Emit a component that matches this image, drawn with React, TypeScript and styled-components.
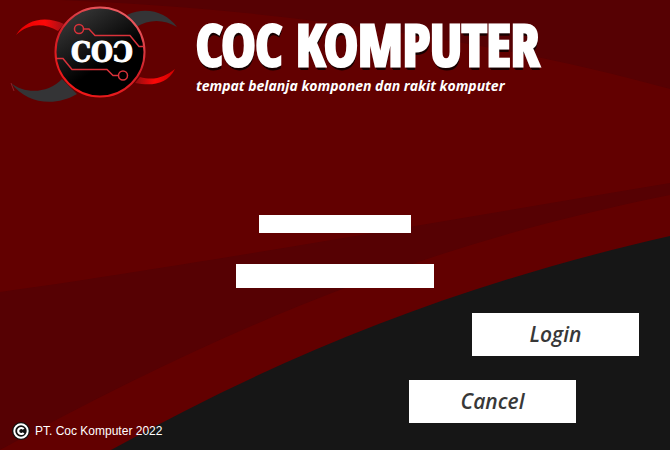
import React from "react";
import styled, { createGlobalStyle } from "styled-components";

const GlobalStyle = createGlobalStyle`
  *, *::before, *::after { box-sizing: border-box; }
  body { margin: 0; background: #620000; }
`;

const Page = styled.div`
  position: relative;
  isolation: isolate;
  min-height: 100vh;
  display: flex;
  flex-direction: column;
  overflow: hidden;
  background: #620000;
  color: #fff;
  font-family: "Open Sans", "Noto Sans", sans-serif;
`;

const Backdrop = styled.svg`
  position: absolute;
  inset: 0;
  z-index: -1;
  width: 100%;
  height: 100%;
`;

const Header = styled.header`
  display: flex;
  align-items: flex-start;
  gap: 12px;
`;

const Logo = styled.svg`
  flex: none;
  width: 184px;
  height: 112px;
`;

const Brand = styled.div`
  padding-top: 12px;
`;

const Title = styled.h1`
  margin: 0;
  font: bold 57px/64px "Open Sans Condensed", "Roboto Condensed", "Liberation Sans Narrow", sans-serif;
  text-shadow: 0 3px 0 #180000, 1px 4px 0 #180000;
  -webkit-text-stroke: 3px #fff;
  white-space: nowrap;
`;

const Tagline = styled.p`
  margin: 0;
  font-size: 14px;
  line-height: 20px;
  font-style: italic;
  font-weight: 700;
  white-space: nowrap;
`;

const Form = styled.form`
  flex: 1;
  display: flex;
  flex-direction: column;
`;

const Fields = styled.div`
  display: flex;
  flex-direction: column;
  align-items: center;
  gap: 31px;
  padding-top: 103px;
`;

const Field = styled.input<{ $large?: boolean }>`
  width: ${(p) => (p.$large ? 198 : 152)}px;
  height: ${(p) => (p.$large ? 24 : 18)}px;
  padding: 0 6px;
  border: 0;
  border-radius: 0;
  background: #fff;
  color: #333;
  font: 13px "Open Sans", sans-serif;
`;

const Bottom = styled.div`
  flex: 1;
  display: flex;
  align-items: flex-end;
  justify-content: space-between;
  padding: 25px 31px 10px 12px;
`;

const Copyright = styled.small`
  display: flex;
  align-items: center;
  gap: 5px;
  font: 12px/18px "Liberation Sans", Arial, sans-serif;
`;

const Actions = styled.div`
  display: flex;
  flex-direction: column;
  gap: 24px;
  padding-bottom: 17px;
`;

const Button = styled.button<{ $inset?: boolean }>`
  width: 167px;
  height: 43px;
  margin-left: ${(p) => (p.$inset ? 0 : 63)}px;
  padding: 0;
  border: 0;
  background: #fff;
  color: #383838;
  font: italic 600 21px/43px "Open Sans", "Noto Sans", sans-serif;
  cursor: pointer;
`;

const BackdropArt = () => (
  <Backdrop viewBox="0 0 670 450" preserveAspectRatio="none" aria-hidden="true">
    <path d="M60 0 C300 10 510 45 670 89 V0Z" fill="#560103" />
    <path d="M0 292 C180 267 430 223 670 183 V195 C420 245 220 330 0 450Z" fill="#560103" />
    <path d="M111 450 C285 354 455 285 670 236 V450Z" fill="#161616" />
  </Backdrop>
);

const LogoArt = () => (
  <Logo viewBox="0 0 184 112" role="img" aria-label="COC logo">
    <defs>
      <linearGradient id="disc" x1="0.2" y1="0" x2="0.6" y2="0.6">
        <stop offset="0" stopColor="#3a3a3a" />
        <stop offset="1" stopColor="#000" />
      </linearGradient>
      <linearGradient id="ring" x1="0.8" y1="0" x2="0.3" y2="1">
        <stop offset="0" stopColor="#ef6268" />
        <stop offset="0.5" stopColor="#cf2028" />
        <stop offset="1" stopColor="#f01818" />
      </linearGradient>
      <linearGradient id="leftHorn">
        <stop offset="0" stopColor="#e60000" />
        <stop offset="0.6" stopColor="#fb0808" />
        <stop offset="1" stopColor="#a01018" />
      </linearGradient>
      <linearGradient id="rightHorn">
        <stop offset="0" stopColor="#900c10" />
        <stop offset="0.5" stopColor="#fb0808" />
        <stop offset="1" stopColor="#d00000" />
      </linearGradient>
    </defs>
    <path d="M16 35 C27 18 47 16 64 24 L58 31 C43 22 28 24 16 35Z" fill="url(#leftHorn)" />
    <path d="M175 69 C167 85 151 86 135 83 L140 77 C154 81 165 77 175 69Z" fill="url(#rightHorn)" />
    <path d="M127 15 C146 6 166 12 177 27 C164 19 149 19 136 27Z" fill="#343436" />
    <path d="M11 83 C24 94 48 94 62 79 L77 94 C55 107 27 104 11 83Z" fill="#343436" />
    <path d="M11 83 L14 91" stroke="#8b2228" />
    <circle cx="100" cy="52" r="44.5" fill="url(#disc)" stroke="url(#ring)" strokeWidth="2" />
    <g fill="none" stroke="#d9323a" strokeWidth="1.5">
      <circle cx="79" cy="29" r="4.5" />
      <path d="M84 29 H89 L95 35.5 H130 L139 46.5 H144" />
      <path d="M56 58.5 H63 L72 69.5 H107 L113 75.5 H118" />
      <circle cx="123" cy="75.5" r="4.5" />
    </g>
    <text
      x="102"
      y="62"
      textAnchor="middle"
      fill="#fff"
      stroke="#fff"
      strokeWidth="1"
      fontFamily="'DejaVu Serif Condensed', 'DejaVu Serif', serif"
      fontWeight="bold"
      fontSize="28"
    >
      COƆ
    </text>
  </Logo>
);

const CopyrightMark = () => (
  <svg width="18" height="18" viewBox="0 0 18 18" aria-hidden="true">
    <circle cx="9" cy="9" r="9" fill="#111" />
    <circle cx="9" cy="9" r="6.7" fill="#111" stroke="#fff" strokeWidth="2" />
    <path d="M11.6 7.2 A3 3 0 1 0 11.6 10.8" fill="none" stroke="#fff" strokeWidth="2.2" />
  </svg>
);

export default function App() {
  return (
    <Page>
      <GlobalStyle />
      <BackdropArt />
      <Header>
        <LogoArt />
        <Brand>
          <Title>COC KOMPUTER</Title>
          <Tagline>tempat belanja komponen dan rakit komputer</Tagline>
        </Brand>
      </Header>
      <Form onSubmit={(e) => e.preventDefault()}>
        <Fields>
          <Field type="text" aria-label="Username" autoComplete="username" />
          <Field $large type="password" aria-label="Password" autoComplete="current-password" />
        </Fields>
        <Bottom>
          <Copyright>
            <CopyrightMark />
            PT. Coc Komputer 2022
          </Copyright>
          <Actions>
            <Button type="submit">Login</Button>
            <Button $inset type="button">Cancel</Button>
          </Actions>
        </Bottom>
      </Form>
    </Page>
  );
}
